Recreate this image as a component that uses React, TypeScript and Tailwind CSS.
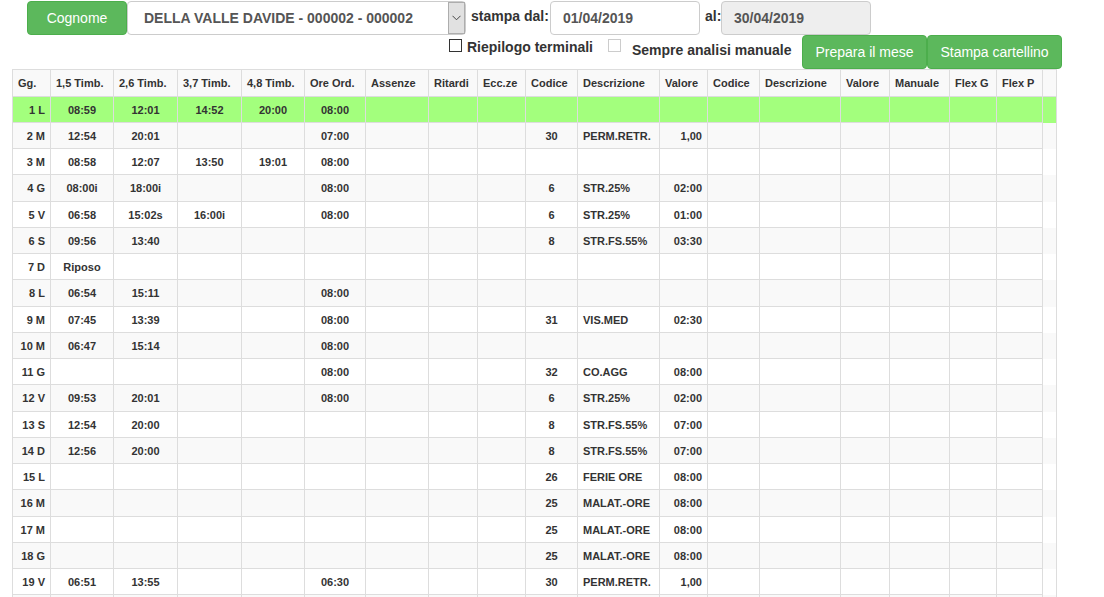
import React, { useState } from "react";

type Day = {
  day: string;
  stamps?: string[];
  ordinary?: string;
  code?: string;
  description?: string;
  value?: string;
};

const days: Day[] = [
  { day: "1 L", stamps: ["08:59", "12:01", "14:52", "20:00"], ordinary: "08:00" },
  { day: "2 M", stamps: ["12:54", "20:01"], ordinary: "07:00", code: "30", description: "PERM.RETR.", value: "1,00" },
  { day: "3 M", stamps: ["08:58", "12:07", "13:50", "19:01"], ordinary: "08:00" },
  { day: "4 G", stamps: ["08:00i", "18:00i"], ordinary: "08:00", code: "6", description: "STR.25%", value: "02:00" },
  { day: "5 V", stamps: ["06:58", "15:02s", "16:00i"], ordinary: "08:00", code: "6", description: "STR.25%", value: "01:00" },
  { day: "6 S", stamps: ["09:56", "13:40"], code: "8", description: "STR.FS.55%", value: "03:30" },
  { day: "7 D", stamps: ["Riposo"] },
  { day: "8 L", stamps: ["06:54", "15:11"], ordinary: "08:00" },
  { day: "9 M", stamps: ["07:45", "13:39"], ordinary: "08:00", code: "31", description: "VIS.MED", value: "02:30" },
  { day: "10 M", stamps: ["06:47", "15:14"], ordinary: "08:00" },
  { day: "11 G", ordinary: "08:00", code: "32", description: "CO.AGG", value: "08:00" },
  { day: "12 V", stamps: ["09:53", "20:01"], ordinary: "08:00", code: "6", description: "STR.25%", value: "02:00" },
  { day: "13 S", stamps: ["12:54", "20:00"], code: "8", description: "STR.FS.55%", value: "07:00" },
  { day: "14 D", stamps: ["12:56", "20:00"], code: "8", description: "STR.FS.55%", value: "07:00" },
  { day: "15 L", code: "26", description: "FERIE ORE", value: "08:00" },
  { day: "16 M", code: "25", description: "MALAT.-ORE", value: "08:00" },
  { day: "17 M", code: "25", description: "MALAT.-ORE", value: "08:00" },
  { day: "18 G", code: "25", description: "MALAT.-ORE", value: "08:00" },
  { day: "19 V", stamps: ["06:51", "13:55"], ordinary: "06:30", code: "30", description: "PERM.RETR.", value: "1,00" },
  { day: "" },
];

const columns = [
  { title: "Gg.", width: "w-[38px]", align: "text-right" },
  { title: "1,5 Timb.", width: "w-[63px]", align: "text-center" },
  { title: "2,6 Timb.", width: "w-[64px]", align: "text-center" },
  { title: "3,7 Timb.", width: "w-[64px]", align: "text-center" },
  { title: "4,8 Timb.", width: "w-[63px]", align: "text-center" },
  { title: "Ore Ord.", width: "w-[61px]", align: "text-center" },
  { title: "Assenze", width: "w-[63px]", align: "text-center" },
  { title: "Ritardi", width: "w-[49px]", align: "text-center" },
  { title: "Ecc.ze", width: "w-[48px]", align: "text-center" },
  { title: "Codice", width: "w-[52px]", align: "text-center" },
  { title: "Descrizione", width: "w-[82px]", align: "text-left" },
  { title: "Valore", width: "w-[48px]", align: "text-right" },
  { title: "Codice", width: "w-[52px]", align: "text-center" },
  { title: "Descrizione", width: "w-[81px]", align: "text-left" },
  { title: "Valore", width: "w-[49px]", align: "text-right" },
  { title: "Manuale", width: "w-[60px]", align: "text-center" },
  { title: "Flex G", width: "w-[47px]", align: "text-center" },
  { title: "Flex P", width: "w-[46px]", align: "text-center" },
  { title: "", width: "w-[14px]", align: "text-center" },
];

function cellsOf(d: Day): string[] {
  const s = d.stamps ?? [];
  return [
    d.day, s[0] ?? "", s[1] ?? "", s[2] ?? "", s[3] ?? "", d.ordinary ?? "",
    "", "", "", d.code ?? "", d.description ?? "", d.value ?? "",
    "", "", "", "", "", "", "",
  ];
}

function GreenButton({ children, className = "" }: { children: React.ReactNode; className?: string }) {
  return (
    <button
      type="button"
      className={`h-[34px] shrink-0 whitespace-nowrap rounded border border-[#4cae4c] bg-[#5cb85c] px-3 text-sm font-normal text-white hover:bg-[#449d44] ${className}`}
    >
      {children}
    </button>
  );
}

const field =
  "h-[34px] appearance-none rounded border border-[#ccc] text-sm font-bold text-[#555] outline-none";

function Toolbar() {
  const [from, setFrom] = useState("01/04/2019");
  return (
    <form className="pt-px text-sm font-bold">
      <div className="flex pl-[27px]">
        <GreenButton className="w-[100px]">Cognome</GreenButton>
        <div className="relative w-[339px]">
          <select aria-label="Cognome" className={`${field} w-full bg-white pl-4`}>
            <option>DELLA VALLE DAVIDE - 000002 - 000002</option>
          </select>
          <span className="pointer-events-none absolute inset-y-px right-px flex w-[17px] items-center justify-center border border-[#adadad] bg-[#e1e1e1]">
            <svg width="9" height="6" viewBox="0 0 9 6" fill="none" stroke="#444" aria-hidden="true">
              <path d="M0.5 0.8 4.5 4.8 8.5 0.8" />
            </svg>
          </span>
        </div>
        <label htmlFor="from" className="w-[84px] whitespace-nowrap pl-[5px] pt-[5px] leading-5">
          stampa dal:
        </label>
        <input
          id="from"
          value={from}
          onChange={(e) => setFrom(e.target.value)}
          className={`${field} w-[150px] bg-white px-3`}
        />
        <label htmlFor="to" className="w-[21px] pl-[5px] pt-[5px] leading-5">
          al:
        </label>
        <input id="to" value="30/04/2019" disabled className={`${field} w-[150px] bg-[#eee] px-3`} />
      </div>
      <div className="flex pl-[449px]">
        <div className="flex w-[159px] items-start pt-1">
          <input
            id="summary"
            type="checkbox"
            className="size-[13px] shrink-0 appearance-none border border-[#333] bg-white checked:bg-[#333]"
          />
          <label htmlFor="summary" className="-mt-0.5 whitespace-nowrap pl-[5px] leading-5">
            Riepilogo terminali
          </label>
        </div>
        <div className="flex w-[194px] items-start pt-1">
          <input
            id="manual"
            type="checkbox"
            disabled
            className="size-[13px] shrink-0 appearance-none border border-[#ccc] bg-white"
          />
          <label htmlFor="manual" className="mt-px whitespace-nowrap pl-[11px] leading-5">
            Sempre analisi manuale
          </label>
        </div>
        <GreenButton className="w-[125px]">Prepara il mese</GreenButton>
        <GreenButton className="w-[135px]">Stampa cartellino</GreenButton>
      </div>
    </form>
  );
}

export default function App() {
  return (
    <main className="bg-white font-['Liberation_Sans',Arial,sans-serif] text-[#333]">
      <Toolbar />
      <table className="ml-3 table-fixed border-collapse text-[11px] leading-4 font-bold">
        <colgroup>
          {columns.map((c, i) => (
            <col key={i} className={c.width} />
          ))}
        </colgroup>
        <thead>
          <tr className="h-[27px] bg-[#f9f9f9]">
            {columns.map((c, i) => (
              <th key={i} scope="col" className="whitespace-nowrap border border-[#ddd] p-0 pl-[5px] text-left">
                {c.title}
              </th>
            ))}
          </tr>
        </thead>
        <tbody>
          {days.map((d, r) => (
            <tr
              key={r}
              className={`h-[26px] nth-[4n]:h-[27px] ${r === 0 ? "bg-[#a3ff7d]" : "bg-white even:bg-[#f9f9f9]"}`}
            >
              {cellsOf(d).map((text, i) => (
                <td
                  key={i}
                  className={`whitespace-nowrap border-x border-[#ddd] px-[5px] py-0 ${columns[i].align} ${
                    i < columns.length - 1 ? "border-y" : ""
                  }`}
                >
                  {text}
                </td>
              ))}
            </tr>
          ))}
        </tbody>
      </table>
    </main>
  );
}
